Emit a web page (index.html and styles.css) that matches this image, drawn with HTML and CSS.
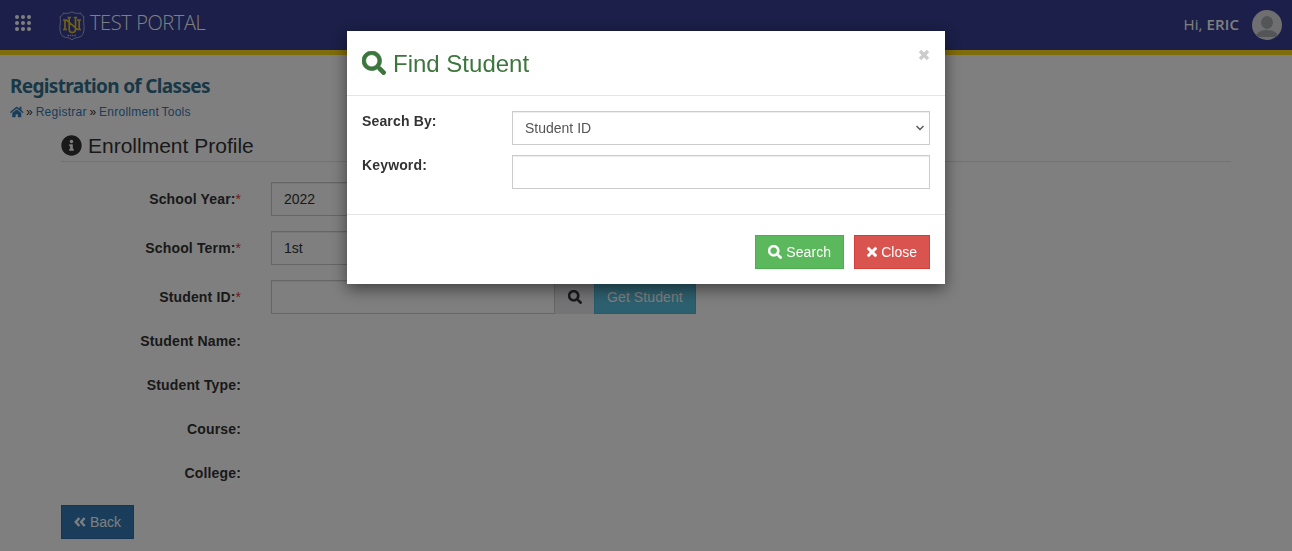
FILE: index.html
```html
<!DOCTYPE html>
<html lang="en">
<head>
    <meta charset="UTF-8">
    <title>Registration of Classes</title>
    <link rel="stylesheet" href="styles.css">
</head>
<body>

<!-- icon sprite -->
<svg class="sprite">
    <symbol id="icon-search" viewBox="0 0 512 512"><path d="M505 442.7L405.3 343c-4.5-4.5-10.600-7-17-7H372c27.600-35.300 44-79.700 44-128C416 93.100 322.900 0 208 0S0 93.100 0 208s93.100 208 208 208c48.300 0 92.700-16.400 128-44v16.300c0 6.400 2.500 12.500 7 17l99.700 99.700c9.400 9.400 24.600 9.400 33.900 0l28.300-28.300c9.400-9.400 9.400-24.600.1-34zM208 336c-70.700 0-128-57.200-128-128 0-70.700 57.200-128 128-128 70.700 0 128 57.200 128 128 0 70.700-57.200 128-128 128z"/></symbol>
    <symbol id="icon-times" viewBox="0 0 352 512"><path d="M242.720 256l100.070-100.070c12.280-12.280 12.280-32.190 0-44.480l-22.240-22.240c-12.280-12.280-32.190-12.280-44.480 0L176 189.280 75.930 89.210c-12.280-12.280-32.190-12.280-44.480 0L9.210 111.450c-12.280 12.280-12.280 32.190 0 44.480L109.280 256 9.210 356.070c-12.280 12.280-12.280 32.190 0 44.480l22.240 22.240c12.280 12.280 32.200 12.280 44.480 0L176 322.720l100.070 100.070c12.280 12.280 32.200 12.280 44.480 0l22.240-22.240c12.280-12.280 12.280-32.190 0-44.480L242.720 256z"/></symbol>
</svg>

<header class="topbar">
    <div class="brand">
        <svg class="apps" viewBox="0 0 16 16">
            <circle cx="2" cy="2" r="2"/><circle cx="8" cy="2" r="2"/><circle cx="14" cy="2" r="2"/>
            <circle cx="2" cy="8" r="2"/><circle cx="8" cy="8" r="2"/><circle cx="14" cy="8" r="2"/>
            <circle cx="2" cy="14" r="2"/><circle cx="8" cy="14" r="2"/><circle cx="14" cy="14" r="2"/>
        </svg>
        <svg class="crest" viewBox="0 0 26 30">
            <path class="shield" d="M13 .8C10 2.600 6.500 2.800 4.300 1.900C4 3.800 2.700 5 1 5.500C2.300 10.500 .3 14 1 19C1.700 24.500 4 26 7.500 26.500C10 26.900 12 27.600 13 29C14 27.600 16 26.900 18.500 26.500C22 26 24.300 24.500 25 19C25.700 14 23.700 10.500 25 5.500C23.300 5 22 3.800 21.700 1.900C19.500 2.800 16 2.600 13 .8Z"/>
            <path class="letters" d="M4 9H7.500L18.500 18.500H22M6 9V18.500M4 18.500H8M18 9H22M20.200 9V18.500M8.500 6.500H12M10.200 6.500V18Q10.200 21.500 13.300 21.500Q16.500 21.500 16.500 18V6.500M14.800 6.500H18.200"/>
            <path class="year" d="M8.500 24.500H17.500"/>
        </svg>
        <span class="brand-name">TEST PORTAL</span>
    </div>
    <div class="user">
        <span class="greeting">Hi, <b>ERIC</b></span>
        <svg class="avatar" viewBox="0 0 30 30">
            <clipPath id="round"><circle cx="15" cy="15" r="15"/></clipPath>
            <g clip-path="url(#round)">
                <rect width="30" height="30" fill="#dfdfe2"/>
                <ellipse cx="15" cy="12.500" rx="6" ry="6.500" fill="#a9abad"/>
                <path d="M3.500 27C5 21.500 10 20 15 20S25 21.500 26.500 27Z" fill="#a9abad"/>
            </g>
        </svg>
    </div>
</header>

<div class="page-head">
    <h1>Registration of Classes</h1>
    <div class="breadcrumb">
        <a href="#"><svg class="icon-home" viewBox="0 0 576 512"><path d="M280.370 148.260L96 300.110V464a16 16 0 0 0 16 16l112.060-.29a16 16 0 0 0 15.920-16V368a16 16 0 0 1 16-16h64a16 16 0 0 1 16 16v95.640a16 16 0 0 0 16 16.050L464 480a16 16 0 0 0 16-16V300L295.670 148.260a12.190 12.190 0 0 0-15.300 0zM571.600 251.470L488 182.560V44.050a12 12 0 0 0-12-12h-56a12 12 0 0 0-12 12v72.610L318.470 43a48 48 0 0 0-61 0L4.340 251.470a12 12 0 0 0-1.600 16.900l25.500 31A12 12 0 0 0 45.150 301l235.220-193.740a12.190 12.190 0 0 1 15.300 0L530.900 301a12 12 0 0 0 16.900-1.600l25.500-31a12 12 0 0 0-1.700-16.930z"/></svg></a>
        <span>»</span> <a href="#">Registrar</a> <span>»</span> <a href="#">Enrollment Tools</a>
    </div>
</div>

<main class="container">
    <h2 class="legend">
        <svg class="icon-info" viewBox="0 0 512 512"><path d="M256 8C119.040 8 8 119.080 8 256c0 137 111.040 248 248 248s248-111 248-248C504 119.080 392.960 8 256 8zm0 110c23.200 0 42 18.800 42 42s-18.800 42-42 42-42-18.800-42-42 18.800-42 42-42zm56 254c0 6.630-5.370 12-12 12h-88c-6.630 0-12-5.370-12-12v-24c0-6.630 5.370-12 12-12h12v-64h-12c-6.630 0-12-5.370-12-12v-24c0-6.630 5.370-12 12-12h64c6.630 0 12 5.370 12 12v100h12c6.630 0 12 5.370 12 12v24z"/></svg>
        Enrollment Profile
    </h2>

    <div class="form-group">
        <label>School Year:<sup>*</sup></label>
        <div class="form-control">2022</div>
    </div>
    <div class="form-group">
        <label>School Term:<sup>*</sup></label>
        <div class="form-control">1st</div>
    </div>
    <div class="form-group">
        <label>Student ID:<sup>*</sup></label>
        <input class="form-control student-id" type="text">
        <span class="addon"><svg class="icon"><use href="#icon-search"/></svg></span>
        <button class="btn btn-info">Get Student</button>
    </div>
    <div class="form-group static"><label>Student Name:</label></div>
    <div class="form-group static"><label>Student Type:</label></div>
    <div class="form-group static"><label>Course:</label></div>
    <div class="form-group static"><label>College:</label></div>

    <button class="btn btn-primary">
        <svg class="icon-back" viewBox="0 0 12 12"><path d="M5.300 2L1.800 6L5.300 10M10.600 2L7.100 6L10.600 10"/></svg>
        Back
    </button>
</main>

<div class="backdrop">
    <div class="modal">
        <div class="modal-header">
            <h3><svg class="icon"><use href="#icon-search"/></svg>Find Student</h3>
            <button class="modal-close"><svg viewBox="0 0 12 12"><path d="M2 2L10 10M10 2L2 10"/></svg></button>
        </div>
        <div class="modal-body">
            <div class="modal-row">
                <label>Search By:</label>
                <div class="form-control select">
                    Student ID
                    <svg class="caret" viewBox="0 0 8 6"><path d="M.5 1L4 4.500L7.500 1"/></svg>
                </div>
            </div>
            <div class="modal-row">
                <label>Keyword:</label>
                <input class="form-control" type="text">
            </div>
        </div>
        <div class="modal-footer">
            <button class="btn btn-success"><svg class="icon"><use href="#icon-search"/></svg>Search</button>
            <button class="btn btn-danger"><svg class="icon-x"><use href="#icon-times"/></svg>Close</button>
        </div>
    </div>
</div>

</body>
</html>
```
FILE: styles.css
```css
* {
    box-sizing: border-box;
}
body {
    margin: 0;
    height: 551px;
    overflow: hidden;
    font-family: "Liberation Sans", Arial, sans-serif;
    font-size: 14px;
    line-height: 20px;
    color: #333;
    background: #fff;
}
svg {
    fill: currentColor;
    flex: none;
}
.sprite {
    display: none;
}
.icon {
    width: 14px;
    height: 14px;
    stroke: currentColor;
    stroke-width: 14;
    overflow: visible;
}

/* Top bar */
.topbar {
    display: flex;
    justify-content: space-between;
    height: 55px;
    padding: 0 10px 0 15px;
    background: #363f92;
    border-bottom: 5px solid #ffd814;
    color: #fff;
    font-family: "Noto Sans", "Open Sans", sans-serif;
}
.brand, .user {
    display: flex;
    align-items: center;
}
.apps {
    width: 16px;
    height: 16px;
    margin: -4px 28px 0 0;
}
.crest {
    width: 26px;
    height: 30px;
    margin: 2px 5px 0 0;
    fill: none;
}
.shield {
    stroke: #a9b0d2;
    stroke-width: 1;
}
.letters {
    stroke: #e0c32e;
    stroke-width: 1.7;
}
.year {
    stroke: #a9b0d2;
    stroke-width: 1.5;
    stroke-dasharray: 1.5 .8;
}
.brand-name {
    font-family: "Open Sans", sans-serif;
    font-size: 20px;
    font-weight: 350;
    letter-spacing: -.4px;
    margin-top: -4px;
}
.greeting {
    font-family: "Open Sans", sans-serif;
    font-size: 15px;
    letter-spacing: .1px;
    margin: -3px 13px 0 0;
}
.greeting b {
    font-weight: 600;
}
.avatar {
    width: 30px;
    height: 30px;
}

/* Page heading */
.page-head {
    padding: 18px 10px 0;
}
.page-head h1 {
    margin: 0;
    font: 700 19px/26px "Noto Sans", sans-serif;
    letter-spacing: -.67px;
    color: #31708f;
}
.breadcrumb {
    margin-top: 5px;
    font-size: 12px;
    line-height: 17px;
    word-spacing: -1px;
    letter-spacing: .27px;
}
.breadcrumb a {
    color: #337ab7;
    text-decoration: none;
}
.icon-home {
    width: 13.500px;
    height: 12px;
    vertical-align: -2px;
}

/* Enrollment form */
.container {
    width: 1170px;
    margin: 0 auto;
}
.legend {
    display: flex;
    align-items: center;
    gap: 6px;
    height: 41px;
    margin: 0 0 20px;
    padding-top: 9px;
    border-bottom: 1px solid #e5e5e5;
    font-size: 21px;
    font-weight: 400;
}
.icon-info {
    width: 21px;
    height: 21px;
}
.form-group {
    display: flex;
    height: 34px;
    margin-bottom: 15px;
}
.form-group label {
    width: 180px;
    margin-right: 30px;
    padding-top: 7px;
    text-align: right;
}
label {
    font-weight: 700;
    letter-spacing: .15px;
}
label sup {
    color: #d9333f;
    font-weight: 400;
    font-size: 14px;
    line-height: 0;
    vertical-align: 0;
    letter-spacing: 0;
}
.form-group.static {
    height: 29px;
}
.form-group.static label {
    padding-top: 2px;
}
.form-control {
    width: 425px;
    height: 34px;
    padding: 6px 12px;
    border: 1px solid #ccc;
    background: #fff;
    box-shadow: inset 0 1px 1px rgba(0, 0, 0, .075);
}
.student-id {
    width: 284px;
}
.addon {
    display: flex;
    align-items: center;
    justify-content: center;
    width: 39px;
    background: #e9e9ed;
}
.btn {
    display: inline-flex;
    align-items: center;
    gap: 4px;
    height: 34px;
    padding: 0 12px;
    border: 1px solid;
    color: #fff;
    font: inherit;
}
.btn-info {
    background: #5bc0de;
    border-color: #46b8da;
    letter-spacing: .1px;
}
.btn-primary {
    background: #337ab7;
    border-color: #2e6da4;
}
.btn-success {
    background: #5cb85c;
    border-color: #4cae4c;
    letter-spacing: .1px;
}
.btn-danger {
    background: #d9534f;
    border-color: #d43f3a;
}
.icon-back {
    width: 12px;
    height: 12px;
    fill: none;
    stroke: currentColor;
    stroke-width: 2.4;
}
.icon-x {
    width: 10px;
    height: 14px;
    stroke: currentColor;
    stroke-width: 20;
}

/* Find Student modal */
.backdrop {
    position: fixed;
    inset: 0;
    padding-top: 31px;
    background: rgba(0, 0, 0, .5);
}
.modal {
    width: 598px;
    height: 253px;
    margin: 0 auto;
    background: #fff;
    box-shadow: 0 5px 15px rgba(0, 0, 0, .5);
}
.modal-header {
    display: flex;
    justify-content: space-between;
    height: 65px;
    padding: 15px;
    border-bottom: 1px solid #e5e5e5;
}
.modal-header h3 {
    display: flex;
    align-items: center;
    gap: 7px;
    height: 35px;
    margin: 0;
    font-size: 24px;
    font-weight: 400;
    color: #3c763d;
}
.modal-header .icon {
    width: 24px;
    height: 24px;
    margin-top: -1px;
}
.modal-close {
    height: 18px;
    padding: 0;
    border: 0;
    background: none;
    color: #ccc;
}
.modal-close svg {
    width: 12px;
    height: 18px;
    display: block;
    stroke: currentColor;
    stroke-width: 3.4;
}
.modal-body {
    display: flex;
    flex-direction: column;
    gap: 10px;
    height: 118px;
    padding: 15px;
}
.modal-row {
    display: flex;
}
.modal-row label {
    width: 150px;
}
.modal-row .form-control {
    width: 418px;
}
.select {
    display: flex;
    align-items: center;
    justify-content: space-between;
    color: #555;
}
.caret {
    width: 8px;
    height: 6px;
    margin-right: -7px;
    fill: none;
    stroke: #555;
    stroke-width: 1.4;
}
.modal-footer {
    display: flex;
    justify-content: flex-end;
    gap: 10px;
    padding: 20px 15px 15px;
    border-top: 1px solid #e5e5e5;
}
```
